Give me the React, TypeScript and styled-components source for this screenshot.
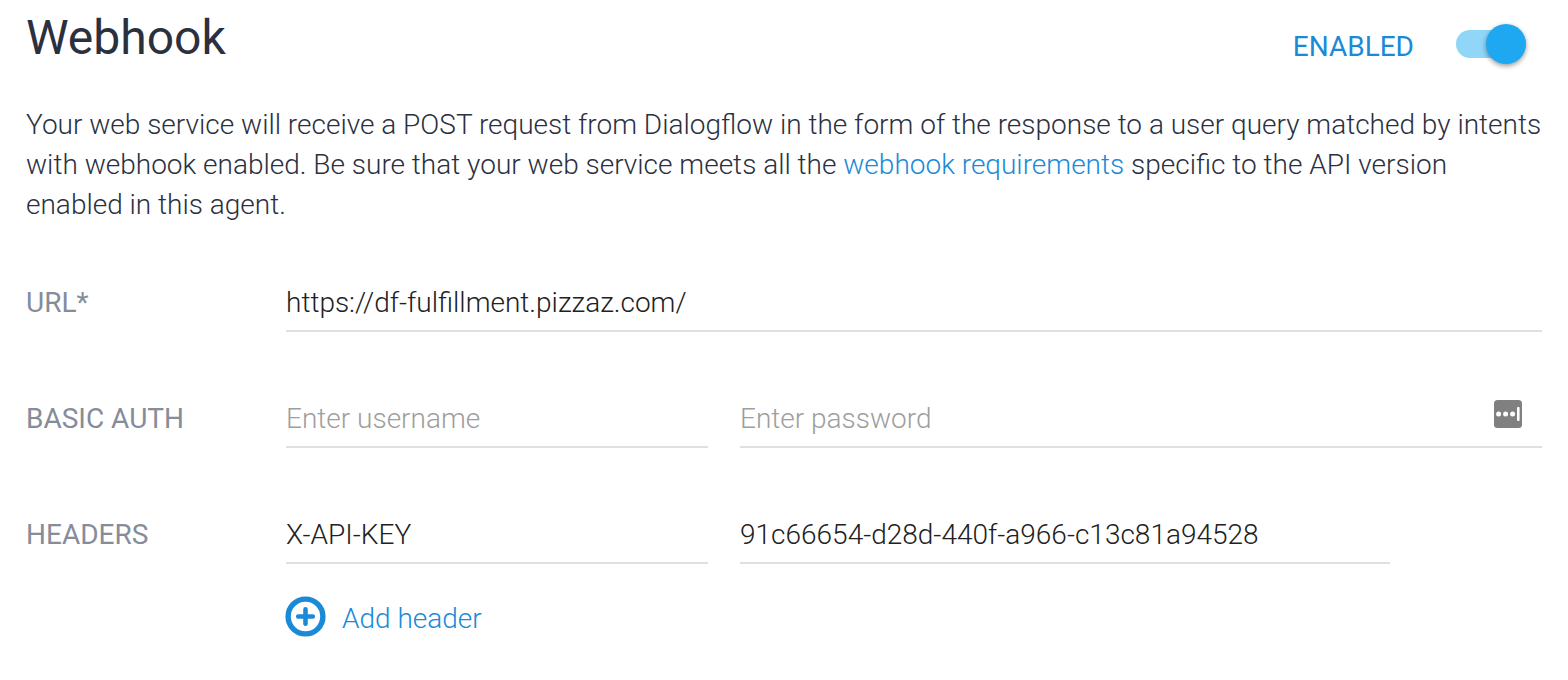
import React from 'react';
import styled, { createGlobalStyle } from 'styled-components';

const Global = createGlobalStyle`
  * { box-sizing: border-box; }
  body { margin: 0; background: #fff; font-family: Roboto, "Liberation Sans", sans-serif; }
`;

const Page = styled.main`
  padding: 8px 26px 32px;
  color: #2b303f;
  font-size: 28px;
  font-weight: 300;
  line-height: 40px;
`;

const TitleBar = styled.header`
  display: flex;
  justify-content: space-between;
  align-items: flex-start;
  padding-right: 16px;
`;

const Title = styled.h1`
  margin: 0;
  font-size: 48px;
  font-weight: 400;
  line-height: 60px;
`;

const SwitchLabel = styled.label`
  display: flex;
  align-items: center;
  gap: 42px;
  padding-top: 13px;
  color: #1a8ad8;
  font-weight: 400;
`;

const SwitchText = styled.span`
  padding-top: 6px;
`;

const Switch = styled.input`
  appearance: none;
  display: flex;
  align-items: center;
  width: 70px;
  height: 28px;
  margin: 0;
  border-radius: 14px;
  background: #8fd6f8;
  cursor: pointer;
  &::before {
    content: "";
    width: 40px;
    height: 40px;
    border-radius: 50%;
    background: #1fa8f2;
    box-shadow: 0 2px 5px rgba(0, 0, 0, 0.4);
  }
  &:checked { justify-content: flex-end; }
`;

const Intro = styled.p`
  margin: 37px 0 0;
`;

const Link = styled.a`
  color: #1a8ad8;
  text-decoration: none;
`;

const Form = styled.form`
  display: flex;
  flex-direction: column;
  gap: 57px;
  margin-top: 48px;
`;

const Row = styled.div`
  display: grid;
  grid-template-columns: 260px 1fr;
`;

const RowLabel = styled.label`
  padding-top: 10px;
  color: #858c9a;
  font-weight: 400;
`;

const Fields = styled.div`
  display: flex;
  gap: 32px;
`;

const Field = styled.div<{ $grow?: boolean; $inset?: boolean }>`
  display: flex;
  align-items: center;
  flex: ${p => (p.$grow ? '1 1 0' : '0 1 422px')};
  min-width: 0;
  padding: 10px 0 7px;
  margin-right: ${p => (p.$inset ? 152 : 0)}px;
  border-bottom: 2px solid #e0e0e0;
`;

const Input = styled.input`
  flex: 1;
  min-width: 0;
  height: 40px;
  padding: 0;
  border: 0;
  outline: 0;
  background: transparent;
  color: #212121;
  font: inherit;
  &::placeholder { color: #9e9e9e; opacity: 1; }
`;

const FieldIcon = styled.svg`
  flex: none;
  margin: 0 20px 10px 0;
`;

const AddButton = styled.button`
  display: flex;
  align-items: flex-start;
  gap: 16px;
  margin: 32px 0 0 260px;
  padding: 0;
  border: 0;
  background: none;
  color: #1a8ad8;
  font: inherit;
  cursor: pointer;
`;

const AddIcon = styled.svg`
  flex: none;
  overflow: visible;
`;

const AddText = styled.span`
  padding-top: 3px;
`;

export default function App() {
  return (
    <Page>
      <Global />
      <TitleBar>
        <Title>Webhook</Title>
        <SwitchLabel>
          <SwitchText>ENABLED</SwitchText>
          <Switch type="checkbox" role="switch" defaultChecked />
        </SwitchLabel>
      </TitleBar>
      <Intro>
        Your web service will receive a POST request from Dialogflow in the form of the response to a user query
        matched by intents with webhook enabled. Be sure that your web service meets all
        the <Link href="#requirements">webhook requirements</Link> specific to the API version enabled in this agent.
      </Intro>
      <Form>
        <Row>
          <RowLabel htmlFor="url">URL*</RowLabel>
          <Fields>
            <Field $grow><Input id="url" defaultValue="https://df-fulfillment.pizzaz.com/" /></Field>
          </Fields>
        </Row>
        <Row>
          <RowLabel htmlFor="username">BASIC AUTH</RowLabel>
          <Fields>
            <Field><Input id="username" placeholder="Enter username" /></Field>
            <Field $grow>
              <Input type="password" aria-label="Password" placeholder="Enter password" />
              <FieldIcon width="28" height="28" viewBox="0 0 28 28" aria-hidden="true">
                <rect width="28" height="28" rx="3.5" fill="#808080" />
                <g fill="#fff">
                  <circle cx="4.6" cy="14" r="2.5" />
                  <circle cx="11.6" cy="14" r="2.5" />
                  <circle cx="18.6" cy="14" r="2.5" />
                  <rect x="23" y="7" width="2.6" height="14" rx="1" />
                </g>
              </FieldIcon>
            </Field>
          </Fields>
        </Row>
        <div>
          <Row>
            <RowLabel htmlFor="header-key">HEADERS</RowLabel>
            <Fields>
              <Field><Input id="header-key" defaultValue="X-API-KEY" /></Field>
              <Field $grow $inset><Input aria-label="Header value" defaultValue="91c66654-d28d-440f-a966-c13c81a94528" /></Field>
            </Fields>
          </Row>
          <AddButton type="button">
            <AddIcon width="40" height="40" viewBox="0 0 40 40" fill="none" stroke="#1a8ad8" aria-hidden="true">
              <circle cx="19.5" cy="20.5" r="17.4" strokeWidth="5.4" />
              <path d="M19.5 13.2v14.6M12.2 20.5h14.6" strokeWidth="4.6" strokeLinecap="round" />
            </AddIcon>
            <AddText>Add header</AddText>
          </AddButton>
        </div>
      </Form>
    </Page>
  );
}
